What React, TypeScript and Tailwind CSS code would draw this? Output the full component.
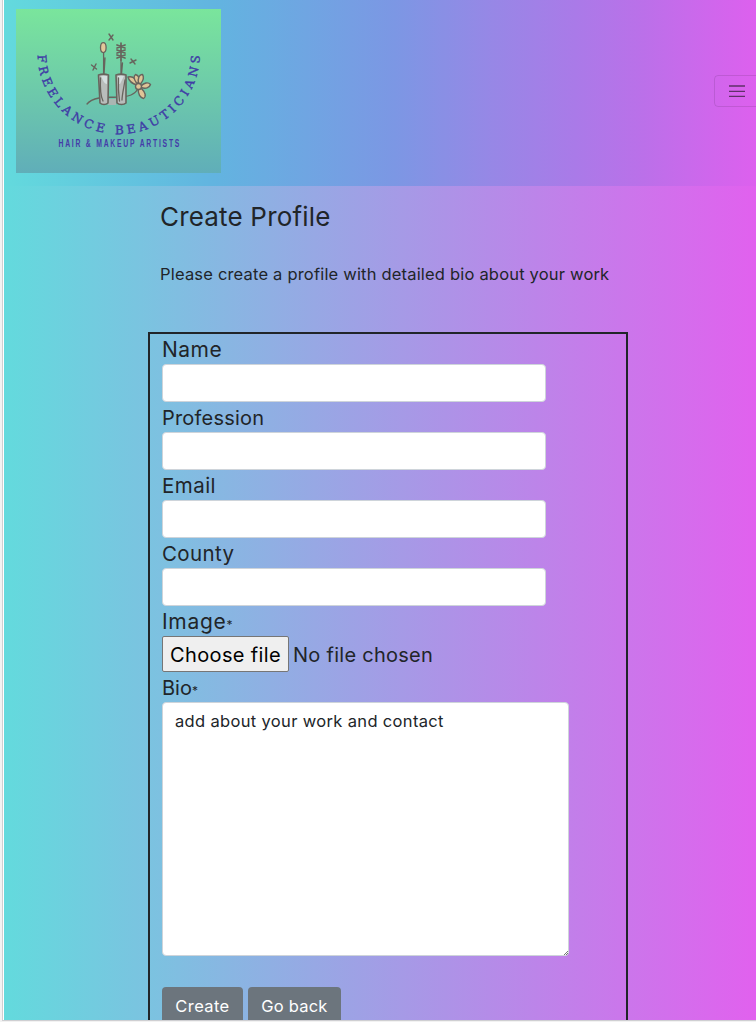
import React from "react";

const label = "block h-[30px] pt-px leading-[30px]";
const input =
  "block h-[38px] w-[384px] rounded-[4px] border border-[#ced4da] bg-white px-3 outline-none";

const fields = [
  { name: "Name", tracking: "text-[21px] tracking-[0.5px]" },
  { name: "Profession", tracking: "text-[20px] tracking-[0.2px]" },
  { name: "Email", tracking: "text-[20.5px] tracking-[0.45px]" },
  { name: "County", tracking: "text-[20.5px] tracking-[0.4px]" },
];

function Logo() {
  return (
    <svg width="205" height="164" viewBox="16 9 205 164" className="block">
      <defs>
        <linearGradient id="logoBg" x1="0" y1="0" x2="0" y2="1">
          <stop offset="0" stopColor="#7ae59c" />
          <stop offset="1" stopColor="#60aeb9" />
        </linearGradient>
        <path id="arc" d="M37.500 53 A81.200 81.200 0 0 0 199.900 53" />
      </defs>
      <rect x="16" y="9" width="205" height="164" fill="url(#logoBg)" />
      <g fill="none" stroke="#67645d" strokeWidth="1.3" strokeLinecap="round" strokeLinejoin="round">
        <path d="M87 104c3-4 7-5 12-6 10-2 22 1 32-3 3-1 5-3 7-6" />
        <path d="M108 99h8v6h-8z" fill="#aab6b2" stroke="none" />
        <path d="M98.500 75c3-1 7-1 10 0l-.5 28c-2 2-6 2-8 0z" fill="#b9bdbb" strokeWidth="1.600" />
        <path d="M116 75c3-1 7-1 10 0v28c-2 2-7 2-9 0z" fill="#b9bdbb" strokeWidth="1.600" />
        <path d="M101 76h6v8c-3 0-4-4-6-8zM118 76h6l-4 8h-2z" fill="#d5dedf" stroke="none" />
        <path d="M100.500 78c-.5 10 0 18 2.500 23M118.500 78c-.5 9 0 16 1 23M125 80c-1 7-3 15-3 20" />
        <path d="M103.600 53v21M105 58l-1 16M121 60v14M122.500 63l-1 11" />
        <ellipse cx="103.300" cy="47.600" rx="2.800" ry="5" fill="#e3c899" />
        <path d="M121 43v17M117 45l8 3M117 48l8-3M117 50l8 3M117 53l8-3M117 55l8 3M117 58l8-3" strokeWidth="1.700" />
        <path d="M109 34l4 6M113 35l-4 5M91.500 65l5 4M96 64l-3 6M131 59l4 5M136 60l-6 3" strokeWidth="1.400" />
        <g fill="#dfc497" strokeWidth="1.400">
          <path d="M137 85c-4-1-8-4-9-8 4-1 8 1 10 7z" />
          <path d="M136.500 83c-3-4-3-7-1-8.500 4 1 4 5 3 8.500z" />
          <path d="M138.500 83c-1-5 1-9 4-8.500 2 3 0 7-2 9.500z" />
          <path d="M141 86c3-3 7-4.500 9.500-1.500-1 3.500-5 4.500-9.500 3z" />
          <path d="M138.500 89c-1 5 2 9 5 9.500 3-2 2-6-2-10z" />
          <circle cx="138.500" cy="86.500" r="3" />
        </g>
      </g>
      <text fill="#403ca6" fontFamily="DejaVu Serif, serif" fontSize="12" stroke="#403ca6" strokeWidth="0.400">
        <textPath href="#arc" startOffset="2" textLength="250" lengthAdjust="spacing">FREELANCE BEAUTICIANS</textPath>
      </text>
      <g transform="translate(58.500 147) scale(0.620 1)">
        <text textLength="195" lengthAdjust="spacing" fill="#443ba9" fontFamily="Liberation Sans, sans-serif" fontSize="11" fontWeight="700">
          HAIR &amp; MAKEUP ARTISTS
        </text>
      </g>
    </svg>
  );
}

export default function App() {
  return (
    <div className="flex h-[1022px] w-[756px] flex-col overflow-hidden bg-[#f2f2f2] font-['Inter',sans-serif] text-[#212529]">
      <div className="ml-[2px] flex h-[1021px] shrink-0 flex-col overflow-hidden border-b border-l border-[#cfcfd2] bg-white pl-px">
        <div className="flex h-[1020px] w-[752px] shrink-0 flex-col bg-linear-to-r/srgb from-[#63dadd] to-[#e161ee]">
          <header className="flex h-[186px] w-[752px] shrink-0 items-start justify-between bg-[linear-gradient(90deg,#63dadd_0%,#62b4e0_28%,#7c97e4_52%,#9787e6_65%,#aa7ae8_76%,#bb70e9_85%,#dd60ee_100%)] pt-[9px] pl-3">
            <Logo />
            <button className="mt-[66px] -mr-[14px] flex h-[32px] w-[56px] shrink-0 items-center justify-center rounded-[4px] border border-black/10" aria-label="Menu">
              <svg width="16" height="12" viewBox="0 0 16 12" className="-ml-[10px]">
                <path d="M0 1h16M0 6.300h16M0 11.300h16" stroke="#5f3068" strokeWidth="1.300" />
              </svg>
            </button>
          </header>
          <main className="ml-[144px] flex w-[480px] grow flex-col overflow-hidden">
            <div className="h-[146px] shrink-0 pl-3 whitespace-nowrap">
              <h1 className="pt-[15px] text-[26px] leading-[32px] tracking-[0.18px]">Create Profile</h1>
              <p className="mt-[29px] text-[16.5px] leading-[24px] tracking-[0.19px]">Please create a profile with detailed bio about your work</p>
            </div>
            <form className="h-[750px] shrink-0 border-2 border-[#212529] px-3 whitespace-nowrap">
              {fields.map(({ name, tracking }) => (
                <label key={name} className="block h-[68px]">
                  <span className={`${label} ${tracking}`}>{name}</span>
                  <input className={input} />
                </label>
              ))}
              <div className={`${label} text-[21px] tracking-[0.7px]`}>
                Image<span className="text-[12px]">*</span>
              </div>
              <div className="flex h-[36px] items-center gap-1 text-[20px]">
                <button type="button" className="h-[36px] w-[127px] rounded-[2px] border border-[#767676] bg-[#efefef] pt-px tracking-[0.35px] text-black">
                  Choose file
                </button>
                <span className="pt-px tracking-[0.27px]">No file chosen</span>
              </div>
              <div className={`${label} text-[20px]`}>
                Bio<span className="text-[12px]">*</span>
              </div>
              <div className="relative w-[407px]">
                <textarea
                  className="block h-[254px] w-[407px] resize-none rounded-[4px] border border-[#ced4da] bg-white px-3 py-[6px] text-[16.5px] leading-[24px] tracking-[0.34px] outline-none"
                  defaultValue="add about your work and contact"
                />
                <svg width="4" height="4" viewBox="0 0 4 4" className="absolute right-[1px] bottom-[1px]">
                  <path d="M0 4L4 0M2 4L4 2" stroke="#555" strokeWidth="0.800" />
                </svg>
              </div>
              <div className="mt-[31px] flex gap-[5px] text-[16.5px] text-white">
                <button type="button" className="h-[38px] w-[81px] rounded-[4px] bg-[#6c757d] tracking-[0.4px]">Create</button>
                <button type="button" className="h-[38px] w-[93px] rounded-[4px] bg-[#6c757d] tracking-[0.2px]">Go back</button>
              </div>
            </form>
          </main>
        </div>
      </div>
    </div>
  );
}
